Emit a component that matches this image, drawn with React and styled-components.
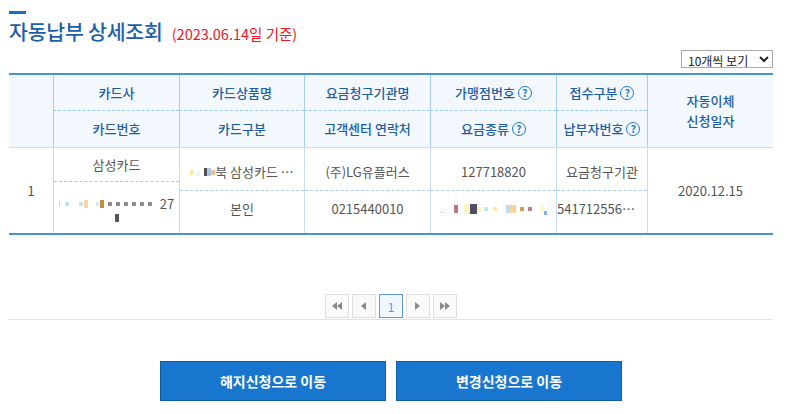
import React from "react"
import styled, { createGlobalStyle } from "styled-components"

const GlobalStyle = createGlobalStyle`
  body {
    margin: 0;
    background: #fff;
    font-family: "Noto Sans CJK KR", "Noto Sans", sans-serif;
  }
  * {
    box-sizing: border-box;
  }
`

const Page = styled.div`
  width: 782px;
  padding: 11px 9px 0;
`

const TitleBar = styled.div`
  width: 17px;
  height: 3px;
  background: #1a6fb8;
`

const TitleRow = styled.h2`
  margin: 4px 0 0;
  display: flex;
  align-items: baseline;
  gap: 9px;
  font-size: 20.5px;
  font-weight: 500;
  color: #1c5ea8;
  line-height: 26px;
  letter-spacing: -0.2px;
`

const Sub = styled.span`
  font-size: 14.5px;
  font-weight: 400;
  color: #f0141e;
  letter-spacing: 0;
`

const Toolbar = styled.div`
  display: flex;
  justify-content: flex-end;
  margin-top: 3px;
  height: 23px;
`

const Select = styled.select`
  width: 92px;
  height: 18px;
  font-family: inherit;
  font-size: 12px;
  color: #222;
  border: 1px solid #a9a9a9;
  background: #fff;
  padding: 0 2px;
`

const cols = "44px 126px 125px 126px 126px 91px 126px"

const Head = styled.div`
  display: grid;
  grid-template-columns: ${cols};
  grid-template-rows: 36px 36px;
  border-top: 2px solid #4b93cb;
  border-bottom: 1px solid #c6dcef;
  background: #f3f8fe;
`

const HCell = styled.div`
  display: flex;
  align-items: center;
  justify-content: center;
  gap: 3px;
  text-align: center;
  font-size: 13px;
  font-weight: 500;
  line-height: 20px;
  color: #1d5da4;
  border-left: ${(p) => (p.$first ? "none" : "1px solid #a8cdf0")};
  border-bottom: ${(p) => (p.$dash ? "1px dashed #9ccbeb" : "none")};
  grid-row: ${(p) => (p.$span ? "1 / span 2" : "auto")};
  grid-column: ${(p) => p.$col || "auto"};
`

const Help = styled.span`
  display: inline-flex;
  align-items: center;
  justify-content: center;
  width: 14px;
  height: 14px;
  border: 1.5px solid #1a7ad0;
  border-radius: 50%;
  font-size: 10px;
  font-weight: 700;
  color: #1a7ad0;
  line-height: 1;
`

const Body = styled.div`
  display: grid;
  grid-template-columns: ${cols};
  height: 87px;
  border-bottom: 2px solid #4b93cb;
`

const BCol = styled.div`
  display: flex;
  flex-direction: column;
  align-items: stretch;
  justify-content: center;
  border-left: ${(p) => (p.$first ? "none" : "1px solid #c6dcef")};
  min-width: 0;
`

const BCell = styled.div`
  flex: ${(p) => p.$grow || 1};
  display: flex;
  flex-direction: column;
  align-items: center;
  justify-content: center;
  font-size: 13px;
  line-height: 20px;
  color: #555;
  white-space: nowrap;
  overflow: hidden;
  padding: ${(p) => p.$pad || "0"};
  border-bottom: ${(p) => (p.$dash ? "1px dashed #a9cde8" : "none")};
`

const Line = styled.div`
  display: flex;
  align-items: center;
  justify-content: ${(p) => p.$justify || "center"};
  width: 100%;
`

const Px = styled.span`
  display: inline-block;
  width: ${(p) => p.$w || 5}px;
  height: ${(p) => p.$h || 5}px;
  background: ${(p) => p.$c};
  margin-top: ${(p) => p.$dy || 0}px;
  margin-right: ${(p) => p.$gap || 0}px;
  flex: none;
`

const Mask = ({ items }) => (
  <>
    {items.map(([w, h, c, gap, dy], i) => (
      <Px key={i} $w={w} $h={h} $c={c} $gap={gap} $dy={dy} />
    ))}
  </>
)

const Pager = styled.div`
  display: flex;
  justify-content: center;
  gap: 3px;
  margin-top: 59px;
  border-bottom: 1px solid #e2e2e2;
  padding-bottom: 1px;
`

const PBtn = styled.button`
  width: 24px;
  height: 24px;
  padding: 0;
  display: flex;
  align-items: center;
  justify-content: center;
  border: 1px solid ${(p) => (p.$active ? "#5a9ad0" : "#dedede")};
  background: ${(p) => (p.$active ? "#f0f7ff" : "#fafafa")};
  color: #6f8fd6;
  font-family: inherit;
  font-size: 12px;
`

const Actions = styled.div`
  display: flex;
  justify-content: center;
  gap: 10px;
  margin-top: 41px;
`

const Action = styled.button`
  width: 226px;
  height: 40px;
  background: #1976cf;
  border: 1px solid #0d5fa6;
  color: #fff;
  font-family: inherit;
  font-size: 14px;
  font-weight: 700;
`

const Tri = ({ dir, double }) => {
  const one = (x) =>
    dir === "l" ? `M${x} 1 L${x} 9 L${x - 5} 5 Z` : `M${x} 1 L${x} 9 L${x + 5} 5 Z`
  const d =
    dir === "l"
      ? double
        ? one(5) + one(10)
        : one(7)
      : double
        ? one(0) + one(5)
        : one(2)
  return (
    <svg width="10" height="10" viewBox="0 0 10 10">
      <path d={d} fill="#8a8a8a" />
    </svg>
  )
}

const headTop = [
  ["카드사"],
  ["카드상품명"],
  ["요금청구기관명"],
  ["가맹점번호", true],
  ["접수구분", true],
]
const headBottom = [
  ["카드번호"],
  ["카드구분"],
  ["고객센터 연락처"],
  ["요금종류", true],
  ["납부자번호", true],
]

const grey = [4, 4, "#8e8e8e", 4]

export default function App() {
  return (
    <Page>
      <GlobalStyle />
      <TitleBar />
      <TitleRow>
        자동납부 상세조회 <Sub>(2023.06.14일 기준)</Sub>
      </TitleRow>
      <Toolbar>
        <Select defaultValue="10">
          <option value="10">10개씩 보기</option>
          <option value="20">20개씩 보기</option>
        </Select>
      </Toolbar>

      <Head>
        <HCell $first $span $col="1" />
        {headTop.map(([t, q], i) => (
          <HCell key={t} $dash $col={i + 2}>
            {t}
            {q && <Help>?</Help>}
          </HCell>
        ))}
        <HCell $span $col="7">
          자동이체
          <br />
          신청일자
        </HCell>
        {headBottom.map(([t, q], i) => (
          <HCell key={t} $col={i + 2}>
            {t}
            {q && <Help>?</Help>}
          </HCell>
        ))}
      </Head>

      <Body>
        <BCol $first>
          <BCell>1</BCell>
        </BCol>
        <BCol>
          <BCell $grow={34} $dash>삼성카드</BCell>
          <BCell $grow={52}>
            <Line>
              <Mask
                items={[
                  [1, 5, "#f7c98a", 5],
                  [4, 4, "#b6e3f5", 10],
                  [4, 4, "#bfe7f8", 1],
                  [4, 8, "#fdd29b", 8],
                  [3, 4, "#c7eef2", 1],
                  [4, 8, "#c68a3c", 4],
                  grey,
                  grey,
                  grey,
                  grey,
                  grey,
                  [4, 4, "#8e8e8e", 8],
                ]}
              />
              27
            </Line>
            <Line>
              <Px $w={4} $h={8} $c="#555" />
            </Line>
          </BCell>
        </BCol>
        <BCol>
          <BCell $dash $pad="6px 0 0">
            <Line>
              <Mask
                items={[
                  [3, 5, "#fde3a8", 3],
                  [4, 4, "#e9f4f8", 4, 4],
                  [3, 8, "#4f4f4f", 0],
                  [4, 8, "#a8c8ee", 0],
                  [4, 5, "#f4c08a", 0],
                ]}
              />
              북 삼성카드 …
            </Line>
          </BCell>
          <BCell $pad="0 0 6px">본인</BCell>
        </BCol>
        <BCol>
          <BCell $dash $pad="6px 0 0">(주)LG유플러스</BCell>
          <BCell $pad="0 0 6px">0215440010</BCell>
        </BCol>
        <BCol>
          <BCell $dash $pad="6px 0 0">127718820</BCell>
          <BCell $pad="0 0 6px">
            <Line>
              <Mask
                items={[
                  [1, 1, "#b88a5a", 12, 6],
                  [4, 8, "#b87a78", 6],
                  [6, 10, "#fff6c8", 0],
                  [7, 10, "#4f4f66", 0],
                  [4, 5, "#fff2b8", 3],
                  [4, 4, "#bfe6f8", 5],
                  [4, 4, "#fde6b0", 9],
                  [4, 8, "#b8e0f6", 0],
                  [6, 8, "#fdd29b", 4],
                  [4, 4, "#d69a5a", 4],
                  [4, 4, "#c77e82", 8],
                  [4, 8, "#fff7d0", 0],
                  [3, 4, "#7eb6ea", 0, 8],
                ]}
              />
            </Line>
          </BCell>
        </BCol>
        <BCol>
          <BCell $dash $pad="6px 0 0">요금청구기관</BCell>
          <BCell $pad="0 0 6px">
            <Line $justify="flex-start">541712556…</Line>
          </BCell>
        </BCol>
        <BCol>
          <BCell>2020.12.15</BCell>
        </BCol>
      </Body>

      <Pager>
        <PBtn>
          <Tri dir="l" double />
        </PBtn>
        <PBtn>
          <Tri dir="l" />
        </PBtn>
        <PBtn $active>1</PBtn>
        <PBtn>
          <Tri dir="r" />
        </PBtn>
        <PBtn>
          <Tri dir="r" double />
        </PBtn>
      </Pager>

      <Actions>
        <Action>해지신청으로 이동</Action>
        <Action>변경신청으로 이동</Action>
      </Actions>
    </Page>
  )
}
